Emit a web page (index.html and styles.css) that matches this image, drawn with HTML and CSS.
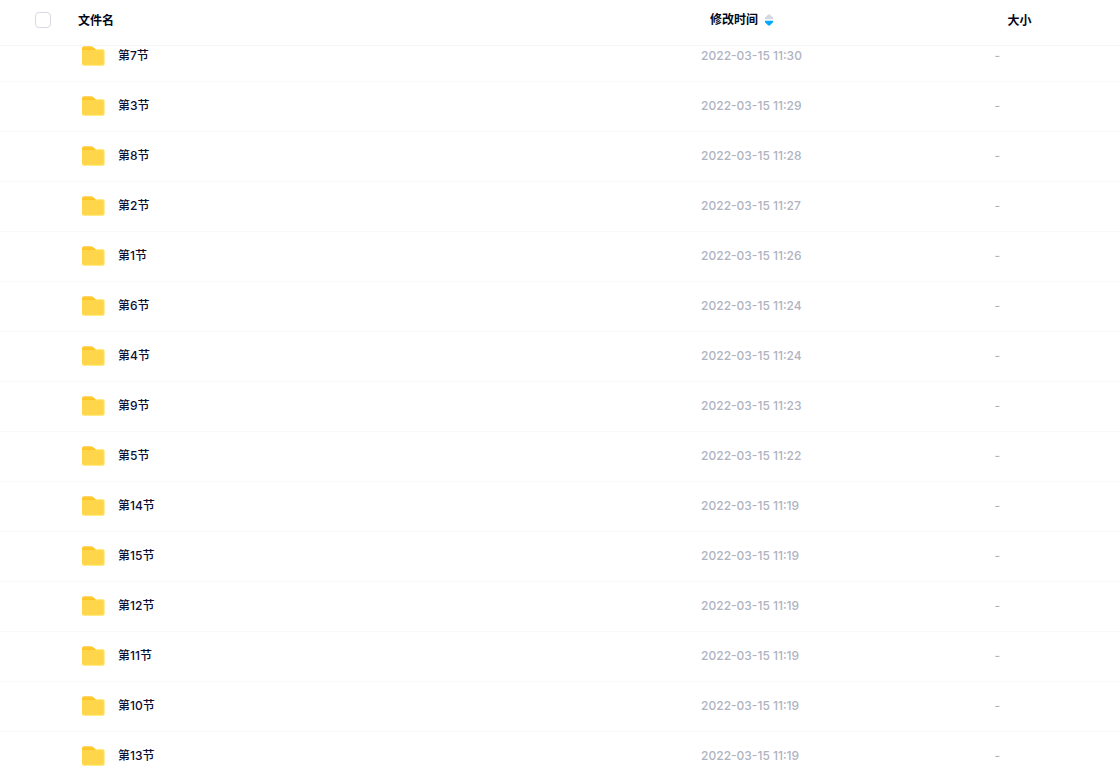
FILE: index.html
```html
<!DOCTYPE html>
<html lang="zh-CN">
<head>
<meta charset="utf-8">
<meta name="viewport" content="width=device-width, initial-scale=1">
<title>文件列表</title>
<link rel="stylesheet" href="styles.css">
</head>
<body>
<svg class="defs" width="0" height="0" aria-hidden="true">
  <symbol id="folder" viewBox="0 0 24 20">
    <path fill="#ffc933" d="M1 2.2Q1 .3 3 .3H9.6Q11.4.3 12.6 1.5L15 4V9H1Z"/>
    <path fill="#ffe45c" d="M1 4H12.6Q13.7 4 14.6 3.5 15.2 3.2 16 3.2H21.6Q23.6 3.2 23.6 5.2V17.8Q23.6 19.8 21.6 19.8H3Q1 19.8 1 17.8Z"/>
    <path fill="#ffd64b" d="M1 4H13Q14 4.6 15 4.2H21.2Q22.6 4.2 22.6 5.6V17.4Q22.6 18.8 21.2 18.8H3Q1 18.8 1 17Z"/>
    <path fill="#ffc522" d="M1 2.6H13.6L15 4H1Z"/>
  </symbol>
</svg>
<main class="list">
  <table class="files">
    <colgroup><col class="col-name"><col class="col-time"><col class="col-size"></colgroup>
    <thead>
      <tr>
        <th scope="col"><div class="head-name"><input class="check" type="checkbox" aria-label="全选"><span class="head-text">文件名</span></div></th>
        <th scope="col"><button class="sort" type="button">修改时间<svg class="arrows" width="8" height="12" viewBox="0 0 8 12" aria-hidden="true"><path fill="#d4d7de" d="M0 5.2V4.3Q0 3.6.7 3L3 .7Q4-.2 5 .7L7.3 3Q8 3.6 8 4.3V5.2Z"/><path fill="#06a7ff" d="M0 6.8V7.7Q0 8.4.7 9L3 11.3Q4 12.2 5 11.3L7.3 9Q8 8.4 8 7.7V6.8Z"/></svg></button></th>
        <th scope="col"><div class="head-size head-text">大小</div></th>
      </tr>
    </thead>
    <tbody id="rows"></tbody>
  </table>
</main>
<script src="app.js"></script>
</body>
</html>
```
FILE: styles.css
```css
* { box-sizing: border-box; }

body {
  margin: 0;
  background: #fff;
  color: #03081a;
  font: 500 12px/20px Inter, "Noto Sans CJK SC", sans-serif;
}

.defs { position: absolute; }

.list {
  height: 100vh;
  overflow-y: auto;
  scrollbar-width: none;
}

.files {
  width: 100%;
  table-layout: fixed;
  border-collapse: separate;
  border-spacing: 0;
}

.col-name { width: 62.6%; }
.col-time { width: 26.2%; }

th {
  position: sticky;
  top: 0;
  z-index: 1;
  height: 46px;
  padding: 0 0 5px;
  background: #fff;
  border-bottom: 1px solid #f5f6fa;
  text-align: left;
  vertical-align: middle;
  font-weight: 700;
}

.head-name {
  display: flex;
  align-items: center;
  gap: 27px;
  padding-left: 35px;
}

.head-text { padding-top: 2px; }

.check {
  appearance: none;
  width: 16px;
  height: 16px;
  margin: 0;
  border: 1px solid #d9d9e3;
  border-radius: 4px;
  background: #fff;
}

.check:checked { background: #06a7ff; border-color: #06a7ff; }

.sort {
  display: flex;
  align-items: center;
  gap: 7px;
  margin: 0;
  padding: 0 0 0 9px;
  border: 0;
  background: none;
  color: inherit;
  font: inherit;
  cursor: pointer;
}

.arrows { display: block; }

.head-size { padding-left: 13px; }

td {
  padding: 14px 0 15px;
  border-bottom: 1px solid #f8f9fb;
  color: #afb3bf;
}

tbody tr:first-child td { padding-top: 0; }

.file {
  display: flex;
  align-items: center;
  gap: 13px;
  padding-left: 81px;
  color: #0c0d33;
  text-decoration: none;
}

.folder { width: 24px; height: 20px; }
```
FILE: app.js
```js
const files = [
  ["第7节", "11:30"], ["第3节", "11:29"], ["第8节", "11:28"],
  ["第2节", "11:27"], ["第1节", "11:26"], ["第6节", "11:24"],
  ["第4节", "11:24"], ["第9节", "11:23"], ["第5节", "11:22"],
  ["第14节", "11:19"], ["第15节", "11:19"], ["第12节", "11:19"],
  ["第11节", "11:19"], ["第10节", "11:19"], ["第13节", "11:19"]
];

document.getElementById("rows").innerHTML = files.map(([name, time]) => `
  <tr>
    <td><a class="file" href="#"><svg class="folder" aria-hidden="true"><use href="#folder"/></svg><span>${name}</span></a></td>
    <td>2022-03-15 ${time}</td>
    <td>-</td>
  </tr>`).join("");
```
